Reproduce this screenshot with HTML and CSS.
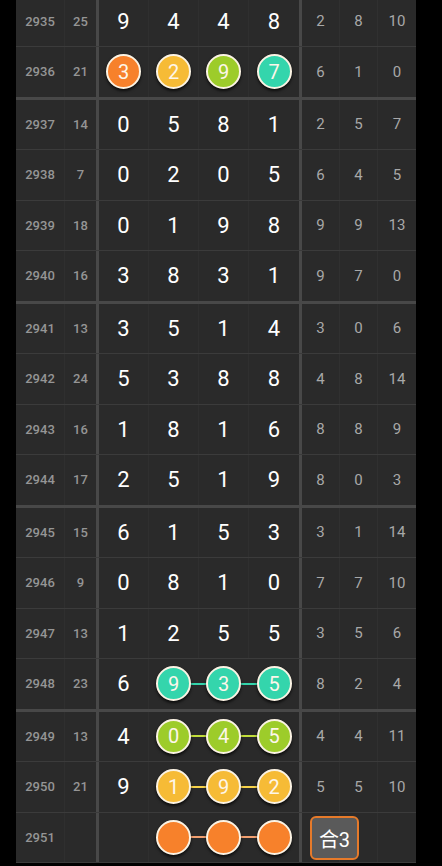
FILE: index.html
```html
<!DOCTYPE html>
<html>
  <head>
    <meta charset="utf-8">
    <title>走势</title>
    <link rel="stylesheet" href="styles.css">
  </head>
  <body>
    <div class="board">
      <div class="row">
        <div class="issue">2935</div><div class="sum">25</div>
        <div class="d">9</div><div class="d">4</div><div class="d">4</div><div class="d">8</div>
        <div class="r">2</div><div class="r">8</div><div class="r">10</div>
      </div>
      <div class="row end">
        <div class="issue">2936</div><div class="sum">21</div>
        <div class="d"><span class="ball orange">3</span></div>
        <div class="d"><span class="ball yellow">2</span></div>
        <div class="d"><span class="ball lime">9</span></div>
        <div class="d"><span class="ball teal">7</span></div>
        <div class="r">6</div><div class="r">1</div><div class="r">0</div>
      </div>

      <div class="row">
        <div class="issue">2937</div><div class="sum">14</div>
        <div class="d">0</div><div class="d">5</div><div class="d">8</div><div class="d">1</div>
        <div class="r">2</div><div class="r">5</div><div class="r">7</div>
      </div>
      <div class="row">
        <div class="issue">2938</div><div class="sum">7</div>
        <div class="d">0</div><div class="d">2</div><div class="d">0</div><div class="d">5</div>
        <div class="r">6</div><div class="r">4</div><div class="r">5</div>
      </div>
      <div class="row">
        <div class="issue">2939</div><div class="sum">18</div>
        <div class="d">0</div><div class="d">1</div><div class="d">9</div><div class="d">8</div>
        <div class="r">9</div><div class="r">9</div><div class="r">13</div>
      </div>
      <div class="row end">
        <div class="issue">2940</div><div class="sum">16</div>
        <div class="d">3</div><div class="d">8</div><div class="d">3</div><div class="d">1</div>
        <div class="r">9</div><div class="r">7</div><div class="r">0</div>
      </div>

      <div class="row">
        <div class="issue">2941</div><div class="sum">13</div>
        <div class="d">3</div><div class="d">5</div><div class="d">1</div><div class="d">4</div>
        <div class="r">3</div><div class="r">0</div><div class="r">6</div>
      </div>
      <div class="row">
        <div class="issue">2942</div><div class="sum">24</div>
        <div class="d">5</div><div class="d">3</div><div class="d">8</div><div class="d">8</div>
        <div class="r">4</div><div class="r">8</div><div class="r">14</div>
      </div>
      <div class="row">
        <div class="issue">2943</div><div class="sum">16</div>
        <div class="d">1</div><div class="d">8</div><div class="d">1</div><div class="d">6</div>
        <div class="r">8</div><div class="r">8</div><div class="r">9</div>
      </div>
      <div class="row end">
        <div class="issue">2944</div><div class="sum">17</div>
        <div class="d">2</div><div class="d">5</div><div class="d">1</div><div class="d">9</div>
        <div class="r">8</div><div class="r">0</div><div class="r">3</div>
      </div>

      <div class="row">
        <div class="issue">2945</div><div class="sum">15</div>
        <div class="d">6</div><div class="d">1</div><div class="d">5</div><div class="d">3</div>
        <div class="r">3</div><div class="r">1</div><div class="r">14</div>
      </div>
      <div class="row">
        <div class="issue">2946</div><div class="sum">9</div>
        <div class="d">0</div><div class="d">8</div><div class="d">1</div><div class="d">0</div>
        <div class="r">7</div><div class="r">7</div><div class="r">10</div>
      </div>
      <div class="row">
        <div class="issue">2947</div><div class="sum">13</div>
        <div class="d">1</div><div class="d">2</div><div class="d">5</div><div class="d">5</div>
        <div class="r">3</div><div class="r">5</div><div class="r">6</div>
      </div>
      <div class="row end">
        <div class="issue">2948</div><div class="sum">23</div>
        <div class="d">6</div>
        <div class="d link-start teal-line"><span class="ball teal">9</span></div>
        <div class="d link-mid teal-line"><span class="ball teal">3</span></div>
        <div class="d link-end teal-line"><span class="ball teal">5</span></div>
        <div class="r">8</div><div class="r">2</div><div class="r">4</div>
      </div>

      <div class="row">
        <div class="issue">2949</div><div class="sum">13</div>
        <div class="d">4</div>
        <div class="d link-start lime-line"><span class="ball lime">0</span></div>
        <div class="d link-mid lime-line"><span class="ball lime">4</span></div>
        <div class="d link-end lime-line"><span class="ball lime">5</span></div>
        <div class="r">4</div><div class="r">4</div><div class="r">11</div>
      </div>
      <div class="row">
        <div class="issue">2950</div><div class="sum">21</div>
        <div class="d">9</div>
        <div class="d link-start yellow-line"><span class="ball yellow">1</span></div>
        <div class="d link-mid yellow-line"><span class="ball yellow">9</span></div>
        <div class="d link-end yellow-line"><span class="ball yellow">2</span></div>
        <div class="r">5</div><div class="r">5</div><div class="r">10</div>
      </div>
      <div class="row">
        <div class="issue">2951</div><div class="sum"></div>
        <div class="d"></div>
        <div class="d link-start orange-line"><span class="ball orange"></span></div>
        <div class="d link-mid orange-line"><span class="ball orange"></span></div>
        <div class="d link-end orange-line"><span class="ball orange"></span></div>
        <div class="r tag-cell"><span class="tag">合3</span></div><div class="r"></div><div class="r"></div>
      </div>
    </div>
  </body>
</html>
```
FILE: styles.css
```css
*{
  box-sizing: border-box;
}

body{
  margin: 0;
  background: #000000;
  font-family: Roboto, "Noto Sans CJK SC", sans-serif;
}

.board{
  width: 400px;
  margin: -3.5px 0 0 16px;
  background: #2a2a2a;
}

.row{
  display: grid;
  grid-template-columns: 49px 34px 50px 50px 50px 53px 38px 38px 38px;
  height: 50.5px;
  border-bottom: 1px solid #3b3b3b;
}

.row.end{
  height: 52.5px;
  border-bottom: 3px solid #484848;
}

.row > div{
  display: flex;
  align-items: center;
  justify-content: center;
}

.issue{
  font-size: 13px;
  font-weight: 500;
  color: #959595;
  border-right: 1px solid #2f2f2f;
}

.sum{
  font-size: 13px;
  font-weight: 500;
  color: #959595;
  border-right: 3px solid #484848;
}

.d{
  font-size: 22px;
  color: #ffffff;
  border-right: 1px solid #2f2f2f;
}

.d:nth-child(6){
  border-right: 3px solid #484848;
}

.r{
  font-size: 15px;
  color: #a8a8a8;
  border-right: 1px solid #303030;
}

.r:last-child{
  border-right: none;
}

/* balls */
.ball{
  flex-shrink: 0;
  width: 35px;
  height: 35px;
  border-radius: 50%;
  border: 2px solid #fbf3e4;
  display: flex;
  align-items: center;
  justify-content: center;
  font-size: 20px;
  color: #fdf6ea;
  box-shadow: 0 2px 3px rgba(0, 0, 0, 0.7);
}

.orange{ background: #f7812b; }
.yellow{ background: #f6bb36; }
.lime{ background: #9dcc2a; }
.teal{ background: #34d5ac; }

/* link lines between balls */
.link-start, .link-mid, .link-end{
  background-repeat: no-repeat;
  background-origin: border-box;
}
.link-start{
  background-size: 50% 2px;
  background-position: right center;
  border-right-color: transparent;
}
.link-mid{
  background-size: 100% 2px;
  background-position: center;
  border-right-color: transparent;
}
.link-end{
  background-size: 50% 2px;
  background-position: left center;
}

.teal-line{ background-image: linear-gradient(#34d5ac, #34d5ac); }
.lime-line{ background-image: linear-gradient(#c2dd3a, #c2dd3a); }
.yellow-line{ background-image: linear-gradient(#f7d34a, #f7d34a); }
.orange-line{ background-image: linear-gradient(#f2a070, #f2a070); }

.row > .tag-cell{
  justify-content: flex-start;
}

.tag{
  flex-shrink: 0;
  display: flex;
  align-items: center;
  justify-content: center;
  width: 49px;
  height: 44px;
  margin-left: 8px;
  margin-top: 2px;
  border: 2px solid #e67a2a;
  border-radius: 6px;
  background: #5a5a5a;
  color: #ffffff;
  font-size: 20px;
  white-space: nowrap;
}
```
